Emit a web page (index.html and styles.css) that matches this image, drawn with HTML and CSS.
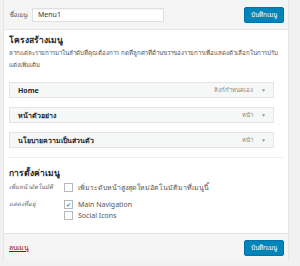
FILE: index.html
```html
<!DOCTYPE html>
<html lang="th">
<head>
    <meta charset="UTF-8">
    <meta name="viewport" content="width=device-width, initial-scale=1.0">
    <title>แก้ไขเมนู</title>
    <link rel="stylesheet" href="styles.css">
</head>
<body>
    <div class="menu-edit">
        <div class="menu-header">
            <label class="name-label" for="menu-name">ชื่อเมนู</label>
            <input type="text" id="menu-name" class="name-input" value="Menu1">
            <button class="save-btn">บันทึกเมนู</button>
        </div>

        <div class="menu-body">
            <h3>โครงสร้างเมนู</h3>
            <p class="desc">ลากแต่ละรายการมาในลำดับที่คุณต้องการ กดที่ลูกศรที่ด้านขวาของรายการเพื่อแสดงตัวเลือกในการปรับแต่งเพิ่มเติม</p>

            <ul class="menu-items">
                <li class="item">
                    <span class="item-title">Home</span>
                    <span class="item-type">ลิงก์กำหนดเอง</span>
                    <span class="arrow">&#9660;</span>
                </li>
                <li class="item">
                    <span class="item-title">หน้าตัวอย่าง</span>
                    <span class="item-type">หน้า</span>
                    <span class="arrow">&#9660;</span>
                </li>
                <li class="item">
                    <span class="item-title">นโยบายความเป็นส่วนตัว</span>
                    <span class="item-type">หน้า</span>
                    <span class="arrow">&#9660;</span>
                </li>
            </ul>

            <div class="settings">
                <h3>การตั้งค่าเมนู</h3>
                <div class="setting-row first">
                    <div class="setting-label">เพิ่มหน้าอัตโนมัติ</div>
                    <div class="setting-opts">
                        <label class="opt"><span class="box"></span>เพิ่มระดับหน้าสูงสุดใหม่อัตโนมัติมาที่เมนูนี้</label>
                    </div>
                </div>
                <div class="setting-row">
                    <div class="setting-label">แสดงที่อยู่</div>
                    <div class="setting-opts">
                        <label class="opt"><span class="box">&#10004;</span>Main Navigation</label>
                        <label class="opt"><span class="box"></span>Social Icons</label>
                    </div>
                </div>
            </div>
        </div>

        <div class="menu-footer">
            <a href="#" class="delete-link">ลบเมนู</a>
            <button class="save-btn">บันทึกเมนู</button>
        </div>
    </div>
</body>
</html>
```

FILE: styles.css
```css
body {
    margin: 0;
    padding: 0 11px 0 3px;
    background-color: #f1f1f1;
    font-family: "Noto Sans", "Liberation Sans", sans-serif;
    color: #23282d;
    font-size: 7px;
}
.menu-edit {
    background-color: #fff;
    border-left: 1px solid #e5e5e5;
    border-right: 1px solid #e5e5e5;
}
.menu-header {
    display: flex;
    align-items: center;
    height: 30px;
    padding: 0 4px 0 5px;
    background-color: #f5f5f5;
    border-bottom: 1px solid #e5e5e5;
    box-sizing: border-box;
}
.name-label {
    width: 23px;
    color: #555;
    font-style: italic;
    font-size: 6.5px;
}
.name-input {
    width: 132px;
    height: 14px;
    padding: 0 5px;
    border: 1px solid #e0e0e0;
    box-sizing: border-box;
    font-family: inherit;
    font-size: 7px;
    color: #32373c;
    box-shadow: inset 0 1px 1px rgba(0,0,0,0.05);
}
.save-btn {
    margin-left: auto;
    width: 40px;
    height: 16px;
    padding: 0;
    background-color: #0085ba;
    border: 1px solid #0073aa;
    border-radius: 2px;
    color: #fff;
    font-family: inherit;
    font-size: 6.5px;
}
.menu-body {
    padding: 4px 5px 12px 5px;
}
h3 {
    margin: 0;
    font-size: 8.5px;
    font-weight: bold;
    line-height: 12px;
}
.desc {
    margin: 1px 0 0 0;
    width: 278px;
    color: #555;
    font-size: 6.2px;
    line-height: 12px;
}
.menu-items {
    list-style: none;
    margin: 11px 0 0 0;
    padding: 0;
    width: 265px;
}
.item {
    display: flex;
    align-items: center;
    height: 16px;
    margin-bottom: 9px;
    padding: 0 7px 0 8px;
    background-color: #f6f7f7;
    border: 1px solid #e2e4e7;
    box-sizing: border-box;
}
.item-title {
    font-weight: bold;
    font-size: 7px;
}
.item-type {
    margin-left: auto;
    margin-right: 8px;
    color: #888;
    font-size: 6px;
}
.arrow {
    color: #999;
    font-size: 5px;
}
.settings {
    margin-top: 7px;
    padding-top: 9px;
    border-top: 1px solid #eee;
}
.setting-row {
    display: flex;
    margin-top: 6px;
}
.setting-row.first {
    margin-top: 3px;
}
.setting-label {
    width: 55px;
    color: #666;
    font-style: italic;
    font-size: 6px;
    line-height: 11px;
}
.setting-opts {
    display: flex;
    flex-direction: column;
}
.opt {
    display: flex;
    align-items: center;
    height: 11px;
    color: #555;
    font-size: 7px;
}
.box {
    width: 7px;
    height: 7px;
    margin-right: 5px;
    border: 1px solid #b4b9be;
    background-color: #fff;
    display: flex;
    align-items: center;
    justify-content: center;
    font-size: 6px;
    color: #1e8cbe;
}
.menu-footer {
    display: flex;
    align-items: center;
    height: 28px;
    padding: 0 4px 0 5px;
    background-color: #f5f5f5;
    border-top: 1px solid #e5e5e5;
    box-sizing: border-box;
}
.delete-link {
    color: #a00;
    text-decoration: underline;
}
```
